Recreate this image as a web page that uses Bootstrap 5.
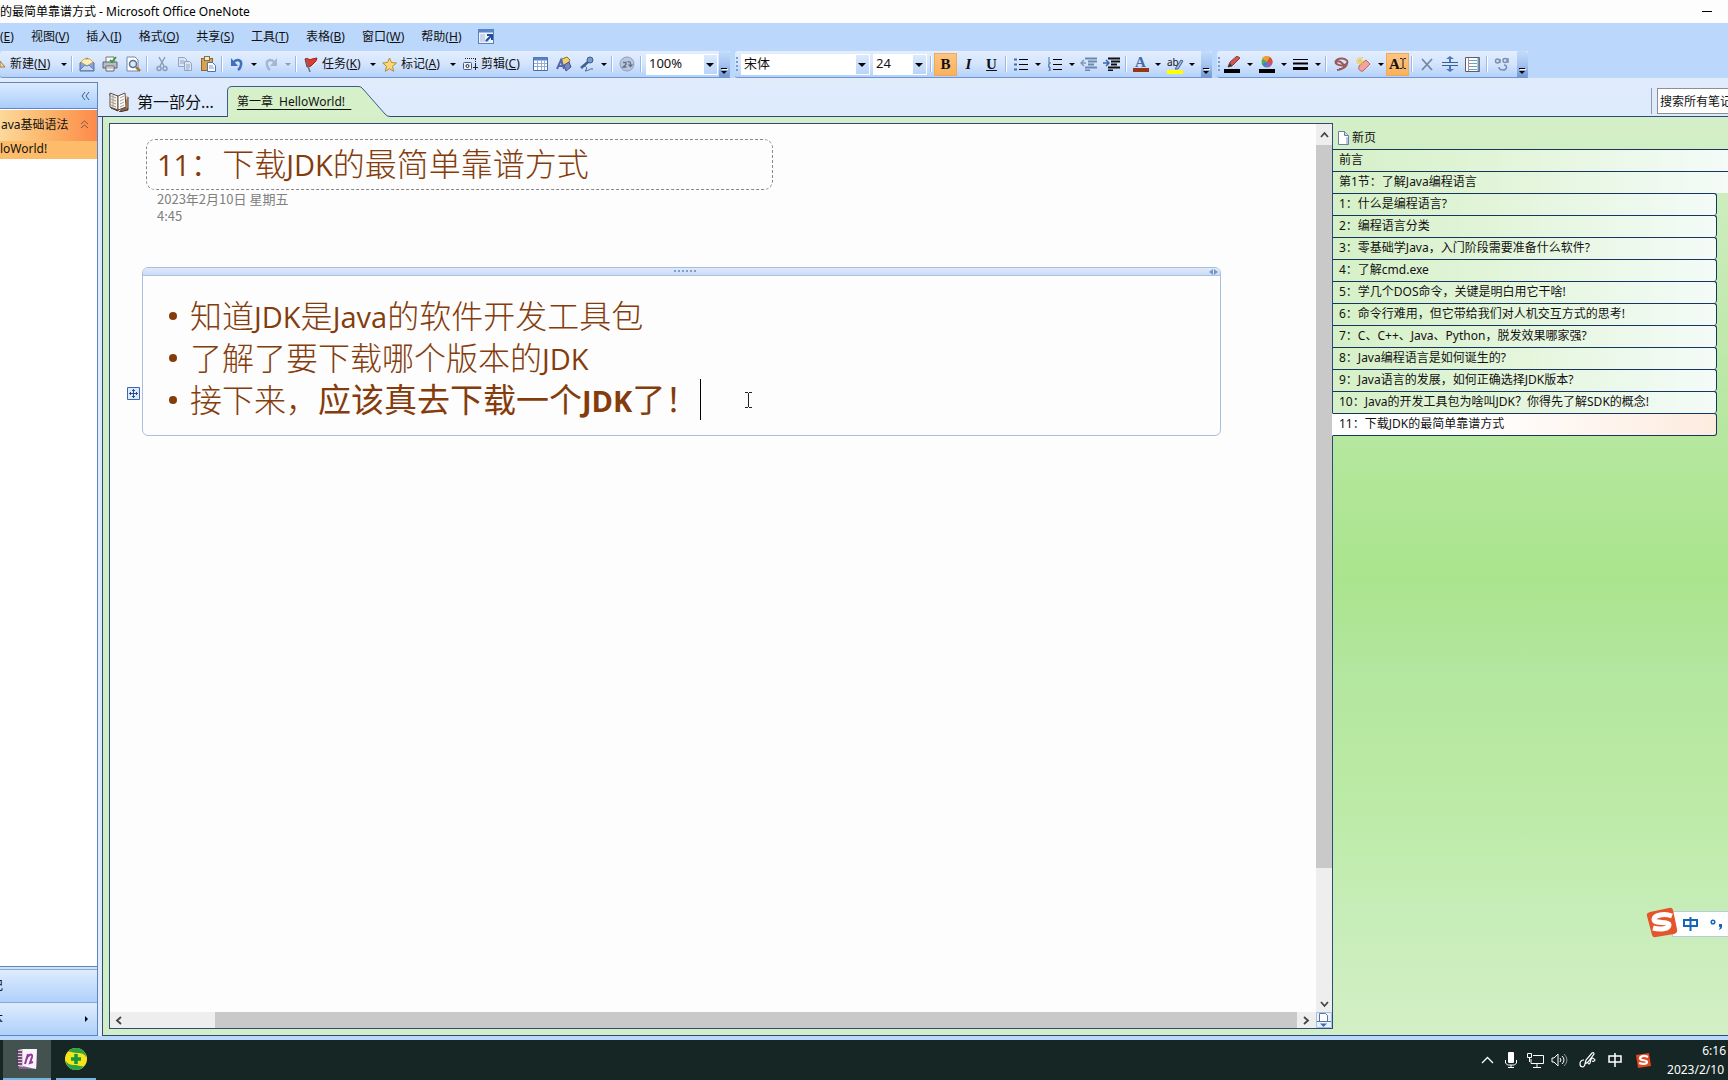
<!DOCTYPE html>
<html lang="zh-CN">
<head>
<meta charset="utf-8">
<meta name="viewport" content="width=device-width, initial-scale=1">
<title>11:下载JDK的最简单靠谱方式 - Microsoft Office OneNote</title>
<link href="https://cdn.jsdelivr.net/npm/bootstrap@5.3.0/dist/css/bootstrap.min.css" rel="stylesheet">
<style>
:root{--ink:#2c4a7c;--leaf:#d3efc5;--brown:#843c0c}
body{height:100vh;overflow:hidden;background:#bbd8fc;color:#111;font:12px/16px "Noto Sans","Noto Sans CJK SC",sans-serif}
button,input,select{font:inherit;color:inherit}
button{border:0;background:none;padding:0;display:flex;align-items:center;justify-content:center;white-space:nowrap}
a{color:inherit;text-decoration:none}
svg{display:block;flex:none}
.titlebar{height:23px;background:#fdfdfd;color:#000}
.titlebar button{width:34px;height:23px}
.menubar{height:28px;gap:17px;padding-bottom:1px}
.toolrow{height:27px;gap:5px}
.toolbar-x{height:27px;background:linear-gradient(#e3eefe,#d3e4fd 50%,#b4d1fa);border-bottom:1px solid #6f97cf;border-radius:3px 0 0 3px}
.grip{width:4px;height:14px;background:repeating-linear-gradient(#7b9cc9 0 2px,transparent 2px 4px) 1px 0/2px 100% no-repeat}
.ib{width:23px;height:23px}
.serif-b,.serif-i,.serif-a{font:700 15px "Liberation Serif",serif}
.serif-i{font-style:italic}
.serif-a{line-height:12px;color:#456aa8}
.dd{width:11px;height:23px}
.dd::after,.combo::after{content:"";border:3px solid transparent;border-top:3px solid #000;border-bottom:0}
.dd.dim::after{border-top-color:#8b9cb8}
.vr-x{width:6px;height:16px;background:linear-gradient(#9bbbe6,#9bbbe6) 2px 0/1px 100% no-repeat,linear-gradient(#fff,#fff) 3px 0/1px 100% no-repeat}
.pressed{background:linear-gradient(#fdc583,#fbb05a);outline:1px solid #efa95a;outline-offset:-1px}
.tb-text{height:23px;justify-content:flex-start}
.w-new{width:54px}.w-task{width:68px}.w-tag{width:69px}.w-clip{width:71px}
.combo{position:relative;height:21px;background:#fff;margin:0 1px 0 2px;width:72px}
.combo.face{width:129px}
.combo.size{width:54px}
.combo select{appearance:none;border:1px solid #fff;background:linear-gradient(#dceafd,#b9d3f8) right/13px 100% no-repeat #fff;width:100%;height:21px;padding:0 2px 2px;outline:0;font-size:13px;line-height:16px}
.combo::after{position:absolute;right:4px;top:9px;border-width:4px 4px 0;pointer-events:none}
.more{width:11px;height:27px;align-items:flex-end;background:linear-gradient(#c5dcfb,#a5c4f0 50%,#6f96d0);border-radius:0 3px 3px 0;margin-bottom:-1px}
.side{width:98px;margin-top:4px;border:1px solid #5c86c0;border-left:0;background:#fff}
.side-top{height:26px;background:linear-gradient(#dcebff,#a9cdfa);border-bottom:1px solid #5c86c0;padding-right:7px}
.side-book{height:31px;margin-top:1px;background:linear-gradient(90deg,#fcd99b,#fbb469 50%,#fd8a4a);padding:0 8px 2px 1px}
.side-sec{height:18px;background:#fdbc6a}
.side-btn{height:33px;background:linear-gradient(#dfecfe,#aed0fb);border-top:1px solid #84a7d6}
.sliver{width:3px;overflow:hidden;display:flex;justify-content:flex-end}
.split{height:3px;border-top:1px solid #5c86c0;background:#cfe2fb}
.strip{height:39px;background:linear-gradient(#e1ebfc,#ddebfd);border-bottom:1px solid var(--ink)}
.strip-wrap{background:#e1ebfc}
.booktab{font-size:16px;gap:8px;margin-left:10px;padding-top:9px}
.sectab{position:relative;height:31px;width:163px;margin:0 0 -1px 13px;justify-content:flex-start;padding:1px 0 0 10px;align-self:flex-end}
.sectab svg{position:absolute;left:0;top:0}
.sectab span{position:relative;text-decoration:underline;text-underline-offset:3px;white-space:pre}
.searchbox{border-left:1px solid #8d9bb0;padding-left:5px;width:77px;height:26px;overflow:hidden}
.searchbox input{width:190px;height:26px;border:1px solid #8a8f98;background:#fff;padding:0 2px;border-radius:0}
.book{margin-left:4px;border-left:1px solid var(--ink);border-bottom:1px solid var(--ink);background:linear-gradient(#d5efc8,#b4e79d 36%,#aae48c 50%,#b3e69e 60%,#bdeba7 76%,#c6edb7 86%,#d3efc5)}
.leftlip{width:6px;background:#d0eec2}
.under{height:6px;background:#d3efc5}
.paper{border:1px solid var(--ink);background:#fdfdfd;margin-top:6px}
.notezone{padding:15px 95px 0 32px}
.titlebox{width:627px;height:51px;margin-left:4px;border:1px dashed #888;border-radius:9px;padding-left:10px;font-size:32px;line-height:48px}
.hand{font-family:"Open Sans","Noto Sans CJK SC",sans-serif;font-weight:300;color:var(--brown);white-space:nowrap}
.hand i{font-style:normal;font-size:29px;font-weight:500}
.hand b{font-size:33px}
.hand b i{font-weight:700}
.stamp{margin-left:15px;color:#808080;font:400 13px/17px "Noto Sans CJK SC",sans-serif}
.outline-x{margin-top:43px;border:1px solid #a9bfdd;border-radius:6px;height:169px;position:relative}
.outline-head{height:8px;background:linear-gradient(#dfe9fb,#cbdcf6);border-bottom:1px solid #a9c1e4;border-radius:5px 5px 0 0;padding:0 2px 0 18px}
.outline-x ul{list-style:none;margin:0;padding:19px 0 0 47px;font-size:32px;line-height:42px}
.outline-x li{position:relative;height:42px}
.outline-x li::before{content:"";position:absolute;left:-21px;top:17px;width:8px;height:8px;border-radius:50%;background:var(--brown)}
.mover{position:absolute;left:-63px;top:8px}
.caret{display:inline-block;width:1px;height:41px;background:#000;vertical-align:top;margin-left:2px}
.ibeam{position:absolute;left:601px;top:124px}
.vbar{width:16px;background:#eee}
.vbar button{width:16px;height:16px}
.vbar .up{height:21px}
.vbar .extend{background:#fff}
.vthumb{background:#c9c9c9;flex:0 0 85%}
.hbar{height:16px;background:#eee}
.hbar button{width:16px;height:16px}
.hbar .right{width:19px}
.hgap{flex:0 0 89px}
.hthumb{background:#c9c9c9}
.pages{width:395px;padding-top:10px}
.newpage{height:22px;padding:0 6px 0 5px;gap:3px}
.list-group{border-radius:0;margin-left:-1px}
.list-group .pg{display:block;height:22px;border-top:1px solid #17365f;background:linear-gradient(90deg,#d5f0c7,#e3f5da 45%,#f4fbf8);padding:2px 0 0 6px;line-height:16px;white-space:nowrap;border-left:1px solid var(--ink)}
.list-group .sub{border-right:1px solid #17365f;margin-right:11px;border-radius:0 3px 3px 0}
.list-group .cur{height:23px;border-bottom:1px solid #17365f;background:linear-gradient(90deg,#fff,#fff 35%,#fdebdf);border-left-color:#fff}
.statusgap{height:4px}
.taskbar{height:40px;background:#152624;color:#fff}
.taskbtn{height:40px;width:40px;border-bottom:2px solid #76b5e4;margin-left:5px}
.taskbtn.on{width:48px;margin-left:3px;background:#43524f}
.tray{gap:8px}
.tray button{width:16px;height:24px}
.clock{text-align:right;line-height:19px;font-size:12px;padding-right:2px}
.clock .day{padding-right:2px}
.ime{position:absolute;right:0;bottom:142px;width:82px;height:31px}
.ime-bar{position:absolute;left:26px;right:0;top:4px;height:26px;background:#fff;border:1px solid #b9cbd8;border-right:0;padding-left:10px;gap:12px}
.ime>svg{position:absolute;left:0;top:0}
</style>
<script src="https://cdn.jsdelivr.net/npm/bootstrap@5.3.0/dist/js/bootstrap.bundle.min.js"></script>
</head>
<body class="d-flex flex-column">

<header class="titlebar d-flex justify-content-between align-items-center flex-shrink-0">
  <span>的最简单靠谱方式 - Microsoft Office OneNote</span>
  <button aria-label="最小化" class="me-1"><svg width="10" height="2"><path d="M0 .5h10" stroke="#000"/></svg></button>
</header>

<nav class="menubar d-flex align-items-center flex-shrink-0">
  <button>(<u>E</u>)</button><button>视图(<u>V</u>)</button><button>插入(<u>I</u>)</button><button>格式(<u>O</u>)</button><button>共享(<u>S</u>)</button><button>工具(<u>T</u>)</button><button>表格(<u>B</u>)</button><button>窗口(<u>W</u>)</button><button>帮助(<u>H</u>)</button>
  <button aria-label="全页视图" class="ms-n1"><svg width="16" height="15"><rect x=".5" y=".5" width="15" height="14" fill="#eef4fd" stroke="#5b7fb8"/><path d="M1 2h14" stroke="#5b86c8" stroke-width="3"/><path d="M2 6h5M2 8h5M2 10h5M2 12h9" stroke="#a9b8cf"/><path d="M8 12l5-5M9 6h5v5" fill="none" stroke="#1e4f9c" stroke-width="2"/></svg></button>
</nav>

<div class="toolrow d-flex flex-shrink-0">
  <div class="toolbar-x d-flex align-items-center">
    <button class="tb-text w-new"><svg class="me-1" width="6" height="12"><path d="M0 3l5 6H0z" fill="#f4d9a0" stroke="#a57a45"/></svg>新建(<u>N</u>)</button><button class="dd ms-1" aria-label="新建选项"></button>
    <span class="vr-x"></span>
    <button class="ib" aria-label="邮件"><svg width="16" height="16"><path d="M1 7l7-5 7 5v8H1z" fill="#7ea3d8" stroke="#54719f"/><path d="M2 6l3-3h6l3 3-6 4z" fill="#fdeec0" stroke="#d6a849"/><path d="M1 14l5-5 2 1 2-1 5 5" fill="#c4d9f5" stroke="#6284b6"/></svg></button>
    <button class="ib" aria-label="打印"><svg width="16" height="16"><path d="M4 6V1h8v5" fill="#fff" stroke="#777"/><path d="M1 6h14v6H1z" fill="#b9bec6" stroke="#5d636e"/><path d="M4 10h8v5H4z" fill="#f8f8f8" stroke="#666"/><path d="M8 4l2 2 4-5" fill="none" stroke="#3a9b3f" stroke-width="2"/><path d="M5 12h6" stroke="#999"/></svg></button>
    <button class="ib" aria-label="打印预览"><svg width="16" height="16"><path d="M2 1h8l3 3v11H2z" fill="#fff" stroke="#7189ad"/><circle cx="8" cy="8" r="3.5" fill="#d6eafa" stroke="#5c6f8c" stroke-width="1.5"/><path d="M11 11l4 4" stroke="#a5783a" stroke-width="2.5"/></svg></button>
    <span class="vr-x"></span>
    <button class="ib" aria-label="剪切"><svg width="14" height="16" fill="none" stroke="#8c9db9" stroke-width="1.5"><path d="M4 1l5 9M10 1L5 10"/><circle cx="4" cy="12.500" r="2"/><circle cx="10" cy="12.500" r="2"/></svg></button>
    <button class="ib" aria-label="复制"><svg width="16" height="16" fill="#d9e4f5" stroke="#93a5c3"><path d="M1.500 1.500h6l2 2v7h-8z"/><path d="M3 5h4M3 7h4"/><path d="M7.500 5.500h5l2 2v7h-7z"/><path d="M9 9h4M9 11h4M9 13h3"/></svg></button>
    <button class="ib" aria-label="粘贴"><svg width="16" height="16"><rect x="1.500" y="2.500" width="11" height="12" fill="#d8a24a" stroke="#8d672b"/><rect x="4.500" y=".5" width="5" height="4" fill="#f2e9c9" stroke="#7d7350"/><path d="M7.500 6.500h5l3 3v6h-8z" fill="#fff" stroke="#4f74ad"/><path d="M9 10h4M9 12h5" stroke="#7c9cd0"/></svg></button>
    <span class="vr-x"></span>
    <button class="ib" aria-label="撤消"><svg width="14" height="14"><path d="M3 6c4-5 9-3 8 2-.3 2-1.500 4-3 5" fill="none" stroke="#3f6fc0" stroke-width="2.500"/><path d="M1 1v8h7z" fill="#3f6fc0"/></svg></button><button class="dd" aria-label="撤消历史"></button>
    <button class="ib" aria-label="恢复"><svg width="14" height="14"><path d="M11 6C7 1 2 3 3 8c.3 2 1.500 4 3 5" fill="none" stroke="#a3b6d3" stroke-width="2.500"/><path d="M13 1v8H6z" fill="#a3b6d3"/></svg></button><button class="dd dim" aria-label="恢复历史"></button>
    <span class="vr-x"></span>
    <button class="tb-text w-task"><span class="ib d-flex align-items-center justify-content-center"><svg width="14" height="15"><path d="M1 2c3-2 4 2 7 0l5-1-1 3-5 5-4 1z" fill="#dd3b2b" stroke="#a32218"/><path d="M2 3l4 12" stroke="#67707e" stroke-width="1.500"/></svg></span>任务(<u>K</u>)</button><button class="dd" aria-label="任务选项"></button>
    <button class="tb-text w-tag"><span class="ib d-flex align-items-center justify-content-center"><svg width="15" height="15"><path d="M7.500 1l2 4.500 5 .5-4 3.300 1.200 5-4.200-2.600-4.200 2.600 1.200-5L.7 6l4.800-.5z" fill="#fcd873" stroke="#b68b3c"/></svg></span>标记(<u>A</u>)</button><button class="dd" aria-label="标记选项"></button>
    <button class="tb-text w-clip"><span class="ib d-flex align-items-center justify-content-center"><svg width="16" height="15" fill="none" stroke="#222"><path d="M3 1.500h11M13.500 2v5" stroke-dasharray="1 1"/><rect x="1.500" y="5.500" width="8" height="7" rx="1" fill="#eef3fb" stroke="#3c5b8c"/><circle cx="5.500" cy="9" r="1.500"/><path d="M13.500 7v6M11 10.500h5"/></svg></span>剪辑(<u>C</u>)</button>
    <button class="ib" aria-label="表格"><svg width="15" height="14"><path d="M.5.5h14v13H.5z" fill="#fff" stroke="#4a6da8"/><path d="M1 2h13" stroke="#5a83c7" stroke-width="3"/><path d="M1 6.500h13M1 9.500h13M4.500 3v10M8.500 3v10M11.500 3v10" stroke="#93add6"/></svg></button>
    <button class="ib" aria-label="绘图"><svg width="16" height="16"><path d="M6 3l5-2 3 3-3 6-5-1z" fill="#f3d267" stroke="#8b7333"/><path d="M1 13l4-9 3 9M3 10h4" fill="none" stroke="#5568b2" stroke-width="2"/><path d="M8 9l5-3 2 5-5 4z" fill="#7688c4" stroke="#43568d"/></svg></button>
    <button class="ib" aria-label="录音"><svg width="15" height="16"><circle cx="11" cy="4" r="3" fill="#7b9ccb" stroke="#3c5a8e"/><path d="M9 6l-7 6" stroke="#3c5a8e" stroke-width="2.500"/><path d="M2 12c4-4 8 0 4 3 4 0 5-3 8-2" fill="none" stroke="#4c6898"/></svg></button><button class="dd" aria-label="录音选项"></button>
    <span class="vr-x"></span>
    <button class="ib" aria-label="同步"><svg width="16" height="16"><circle cx="8" cy="8" r="7" fill="#b9c6dc" stroke="#8f9fba"/><path d="M4 6.500h3v2l-3 2.500h3.500M8.500 6q2-1 3 1v3M9.500 8.500l2 2 2-2" fill="none" stroke="#60708e" stroke-width="1.300"/></svg></button>
    <span class="vr-x"></span>
    <div class="combo"><select aria-label="显示比例"><option>100%</option></select></div>
    <button class="more" aria-label="更多常用按钮"><svg width="9" height="11"><path d="M1 1.500h6" stroke="#000"/><path d="M2 2.500h6" stroke="#fff"/><path d="M1 4h6L4 7z" fill="#000"/></svg></button>
  </div>

  <div class="toolbar-x d-flex align-items-center">
    <span class="grip"></span>
    <div class="combo face"><select aria-label="字体"><option>宋体</option></select></div>
    <div class="combo size"><select aria-label="字号"><option>24</option></select></div>
    <span class="vr-x"></span>
    <button class="ib pressed serif-b" aria-label="加粗">B</button>
    <button class="ib serif-i" aria-label="倾斜">I</button>
    <button class="ib serif-b" aria-label="下划线"><u>U</u></button>
    <span class="vr-x"></span>
    <button class="ib" aria-label="项目符号"><svg width="14" height="13"><path d="M0 1.500h3M0 6.500h3M0 11.500h3" stroke="#4a6da8" stroke-width="2"/><path d="M5 1.500h9M5 6.500h9M5 11.500h9" stroke="#000"/></svg></button><button class="dd" aria-label="项目符号选项"></button>
    <button class="ib" aria-label="编号"><svg width="14" height="14"><path d="M1 0v4M0 5h2v2H0v2h2M0 10h2v4H0M1 12h1" fill="none" stroke="#4a6da8"/><path d="M5 2.500h9M5 7.500h9M5 12.500h9" stroke="#000"/></svg></button><button class="dd" aria-label="编号选项"></button>
    <button class="ib" aria-label="减少缩进"><svg width="17" height="14"><path d="M5 1.500h12M8 4.500h9M8 7.500h6M5 10.500h12M5 13.500h5" stroke="#6f88ad" stroke-width="2"/><path d="M6 6H1m3-3L1 6l3 3" fill="none" stroke="#7f98bf" stroke-width="1.500"/></svg></button>
    <button class="ib" aria-label="增加缩进"><svg width="17" height="14"><path d="M5 1.500h12M8 4.500h9M8 7.500h6M5 10.500h12M5 13.500h5" stroke="#111" stroke-width="2"/><path d="M0 6h5M3 3l3 3-3 3" fill="none" stroke="#3a68ad" stroke-width="1.500"/></svg></button>
    <span class="vr-x"></span>
    <button class="ib flex-column serif-a" aria-label="字体颜色">A<svg width="16" height="4"><path d="M0 0h16v4H0z" fill="#9c3412"/></svg></button><button class="dd" aria-label="字体颜色选项"></button>
    <button class="ib" aria-label="突出显示"><svg width="18" height="21" viewBox="0 -4 18 21"><text x="1" y="8" font-size="10" fill="#111">ab</text><path d="M9 11l6-9 2 1-5 8z" fill="#9db7e2" stroke="#46618f"/><path d="M1 12h16v4H1z" fill="#ff0"/></svg></button><button class="dd" aria-label="突出显示选项"></button>
    <button class="more ms-1" aria-label="更多格式按钮"><svg width="9" height="11"><path d="M1 1.500h6" stroke="#000"/><path d="M2 2.500h6" stroke="#fff"/><path d="M1 4h6L4 7z" fill="#000"/></svg></button>
  </div>

  <div class="toolbar-x d-flex align-items-center">
    <span class="grip"></span>
    <button class="ib" aria-label="笔"><svg width="17" height="17"><path d="M4 11l2-5 7-6 3 2-8 8z" fill="#d5554d" stroke="#7d4640"/><path d="M4 11l2-4 2 3z" fill="#333"/><path d="M0 13h16v4H0z"/></svg></button><button class="dd" aria-label="笔选项"></button>
    <button class="ib" aria-label="墨迹颜色"><svg width="16" height="17"><circle cx="8" cy="6" r="5.500" fill="#4caf50"/><path d="M8 6L3 2a6 6 0 0 1 8-1z" fill="#f29b38"/><path d="M8 6l3-5a6 6 0 0 1 2 7z" fill="#e3493b"/><path d="M8 6l5 2a6 6 0 0 1-6 3z" fill="#a654c6"/><path d="M8 6l-1 5a6 6 0 0 1-4-3z" fill="#3a7fe0"/><path d="M0 13h16v4H0z"/></svg></button><button class="dd" aria-label="墨迹颜色选项"></button>
    <button class="ib" aria-label="线宽"><svg width="15" height="12"><path d="M0 1.500h15" stroke="#000"/><path d="M0 5.500h15" stroke="#000" stroke-width="2"/><path d="M0 10.500h15" stroke="#000" stroke-width="3"/></svg></button><button class="dd" aria-label="线宽选项"></button>
    <span class="vr-x"></span>
    <button class="ib" aria-label="套索"><svg width="16" height="15" fill="none" stroke="#9a5a5c" stroke-width="2"><ellipse cx="8.500" cy="5" rx="6" ry="3.500"/><path d="M3 7c-1-3 3-4 6-1s3 6-5 7M14 6c0 4-4 6-8 6"/></svg></button>
    <button class="ib" aria-label="橡皮擦"><svg width="16" height="16"><path d="M3 10l7-6 4 4-7 7c-3 1-5-2-4-5z" fill="#f4a49a" stroke="#b7685f"/><path d="M4 1v8M1 2l6 6M0 5h8M7 1L1 8" stroke="#f5c52d"/></svg></button><button class="dd" aria-label="橡皮擦选项"></button>
    <button class="ib pressed serif-b" aria-label="选择和键入">A<svg width="6" height="12"><path d="M0 .5h2l1 1 1-1h2M3 1v9M0 10.500h2l1-1 1 1h2" fill="none" stroke="#222"/></svg></button>
    <span class="vr-x"></span>
    <button class="ib" aria-label="删除"><svg width="12" height="13"><path d="M1 1l10 11M11 1L1 12" stroke="#7686a3" stroke-width="1.800"/></svg></button>
    <button class="ib" aria-label="插入空间"><svg width="16" height="16"><path d="M0 6.500h16M0 9.500h16" stroke="#3f5f92"/><path d="M8 0l4 3H9v3H7V3H4zM8 16l4-3H9v-3H7v3H4z" fill="#4b78c1"/></svg></button>
    <button class="ib" aria-label="格线"><svg width="15" height="15"><path d="M.5.5h14v14H.5z" fill="#fff" stroke="#555f70"/><path d="M3 3.500h9M3 6.500h9M3 9.500h9M3 12.500h9" stroke="#5fa8c8"/><path d="M3.500 1v13" stroke="#d38080"/><path d="M13.500 1v13" stroke="#8190a8" stroke-width="2"/></svg></button>
    <span class="vr-x"></span>
    <button class="ib" aria-label="墨迹转文本"><svg width="15" height="16" fill="none" stroke="#7d8fb0" stroke-width="1.500"><circle cx="3.500" cy="5" r="2"/><path d="M6 3v4M14 2v5"/><circle cx="11" cy="4.500" r="2"/><path d="M10 9c4 0 3 5-1 5-3 0-4-1-4-3"/></svg></button>
    <button class="more ms-1" aria-label="更多绘图按钮"><svg width="9" height="11"><path d="M1 1.500h6" stroke="#000"/><path d="M2 2.500h6" stroke="#fff"/><path d="M1 4h6L4 7z" fill="#000"/></svg></button>
  </div>
</div>

<div class="strip-wrap d-flex flex-grow-1 overflow-hidden">
  <aside class="side d-flex flex-column flex-shrink-0">
    <div class="side-top d-flex align-items-center justify-content-end flex-shrink-0"><button aria-label="折叠"><svg width="9" height="8"><path d="M4 0L1 4l3 4M8 0L5 4l3 4" fill="none" stroke="#345a96"/></svg></button></div>
    <a href="#" class="side-book d-flex align-items-center justify-content-between flex-shrink-0">ava基础语法<svg width="9" height="9"><path d="M1 4l3.500-3L8 4M1 8l3.500-3L8 8" fill="none" stroke="#7b5a48"/></svg></a>
    <a href="#" class="side-sec flex-shrink-0">loWorld!</a>
    <div class="flex-grow-1"></div>
    <div class="split flex-shrink-0"></div>
    <button class="side-btn justify-content-start flex-shrink-0"><span class="sliver">记</span></button>
    <button class="side-btn justify-content-between flex-shrink-0 pe-1"><span class="sliver">本</span><svg class="me-1" width="4" height="6"><path d="M0 0l3 3-3 3z"/></svg></button>
  </aside>

  <div class="d-flex flex-column flex-grow-1 overflow-hidden">
    <div class="strip d-flex align-items-center flex-shrink-0">
      <button class="booktab"><svg width="21" height="20"><path d="M1 3l2-1v14l7 3V5L3 2M20 5v13l-9 2" fill="#8a6246" stroke="#463126"/><path d="M2 1l8 3v14l-8-3z" fill="#f4f1ec" stroke="#5b4a40"/><path d="M10 4l7-3 1 14-8 3z" fill="#fff" stroke="#5b4a40"/><path d="M3 4l5 2M3 7l5 2M3 10l5 2M3 13l5 2M12 6l4-2M12 9l4-2M12 12l4-2M12 15l4-2M5 3v12" stroke="#a79a90"/><path d="M19 4v12" stroke="#c99a6a"/></svg>第一部分...</button>
      <button class="sectab"><svg width="163" height="31"><path d="M.5 31V5Q.5.500 5 .5H132Q134 .5 136 3L158 28Q160 30.500 163 30.500V31z" fill="#d6f0c9"/><path d="M.5 31V5Q.5.500 5 .5H132Q134 .5 136 3L158 28Q160 30.500 163 30.500" fill="none" stroke="#3b5c8c"/></svg><span>第一章  HelloWorld!  </span></button>
      <div class="searchbox ms-auto mt-2"><input aria-label="搜索" value="搜索所有笔记本"></div>
    </div>

    <main class="flex-grow-1 d-flex flex-column overflow-hidden">
      <div class="book flex-grow-1 d-flex overflow-hidden">
        <div class="leftlip"></div>
        <div class="d-flex flex-column flex-grow-1">
          <div class="paper flex-grow-1 d-flex">
            <div class="d-flex flex-column flex-grow-1">
              <div class="notezone flex-grow-1">
                <h1 class="titlebox hand mb-0"><i>11</i>：下载<i>JDK</i>的最简单靠谱方式</h1>
                <div class="stamp">2023年2月10日 星期五<br>4:45</div>
                <section class="outline-x">
                  <div class="outline-head d-flex align-items-center"><svg class="mx-auto" width="23" height="4"><path d="M0 1h23" stroke="#7f9fca" stroke-width="2" stroke-dasharray="2 2"/></svg><svg width="9" height="6"><path d="M4 0v6L0 3zM5 0v6l4-3z" fill="#7b98c2"/></svg></div>
                  <ul class="hand">
                    <li>知道<i>JDK</i>是<i>Java</i>的软件开发工具包</li>
                    <li>了解了要下载哪个版本的<i>JDK</i></li>
                    <li><svg class="mover" width="13" height="13"><path d="M.5.500h12v12H.5z" fill="#dce9fb" stroke="#3b66a8"/><path d="M6.500 2v9M2 6.500h9M5 3.500h3M5 9.500h3M3.500 5v3M9.500 5v3" stroke="#24508f"/></svg>接下来，<b>应该真去下载一个<i>JDK</i>了！</b><span class="caret"></span></li>
                  </ul>
                  <svg class="ibeam" width="9" height="16"><path d="M1 .5h3M5 .5h3M4.500 1v14M1 15.500h3M5 15.500h3" stroke="#222"/></svg>
                </section>
              </div>
              <div class="hbar d-flex align-items-center">
                <button aria-label="向左滚动"><svg width="7" height="9"><path d="M6 1L2 4.500 6 8" fill="none" stroke="#444" stroke-width="1.800"/></svg></button>
                <span class="hgap"></span><span class="hthumb h-100 flex-grow-1"></span>
                <button class="right" aria-label="向右滚动"><svg width="7" height="9"><path d="M1 1l4 3.500L1 8" fill="none" stroke="#444" stroke-width="1.800"/></svg></button>
              </div>
            </div>
            <div class="vbar d-flex flex-column">
              <button class="up" aria-label="向上滚动"><svg width="9" height="7"><path d="M1 6l3.500-4L8 6" fill="none" stroke="#444" stroke-width="1.800"/></svg></button>
              <div class="flex-grow-1 d-flex flex-column"><span class="vthumb"></span></div>
              <button aria-label="向下滚动"><svg width="9" height="7"><path d="M1 1l3.500 4L8 1" fill="none" stroke="#444" stroke-width="1.800"/></svg></button>
              <button class="extend" aria-label="向下延长页面"><svg width="16" height="16"><path d="M.5.500h15v15H.5z" fill="#eaf1fc" stroke="#a9bfe2"/><path d="M3.500 9V1.500h6l2 2V9" fill="#fff" stroke="#5775a8"/><path d="M1 9.500h14" stroke="#5775a8"/><path d="M4 11.500h7L7.500 15z" fill="#4566b0"/></svg></button>
            </div>
          </div>
          <div class="under flex-shrink-0"></div>
        </div>
        <div class="pages flex-shrink-0">
          <button class="newpage"><svg width="11" height="14"><path d="M.5.500h6l4 4v9H.5z" fill="#fff" stroke="#6880a8"/><path d="M6.500.5v4h4" fill="#c5d4ec" stroke="#6880a8"/><path d="M9 6v7" stroke="#b9c8e0" stroke-width="2"/></svg>新页</button>
          <div class="list-group">
            <a href="#" class="pg">前言</a>
            <a href="#" class="pg">第1节：了解Java编程语言</a>
            <a href="#" class="pg sub">1：什么是编程语言?</a>
            <a href="#" class="pg sub">2：编程语言分类</a>
            <a href="#" class="pg sub">3：零基础学Java，入门阶段需要准备什么软件?</a>
            <a href="#" class="pg sub">4：了解cmd.exe</a>
            <a href="#" class="pg sub">5：学几个DOS命令，关键是明白用它干啥!</a>
            <a href="#" class="pg sub">6：命令行难用，但它带给我们对人机交互方式的思考!</a>
            <a href="#" class="pg sub">7：C、C++、Java、Python，脱发效果哪家强?</a>
            <a href="#" class="pg sub">8：Java编程语言是如何诞生的?</a>
            <a href="#" class="pg sub">9：Java语言的发展，如何正确选择JDK版本?</a>
            <a href="#" class="pg sub">10：Java的开发工具包为啥叫JDK？你得先了解SDK的概念!</a>
            <a href="#" class="pg sub cur">11：下载JDK的最简单靠谱方式</a>
          </div>
        </div>
      </div>
    </main>
  </div>
</div>
<div class="statusgap flex-shrink-0"></div>

<footer class="taskbar d-flex align-items-center flex-shrink-0">
  <button class="taskbtn on" aria-label="OneNote"><svg width="24" height="24"><path d="M5 2h15l2 2v16l-3 2H4L2 8z" fill="#8d5f92"/><path d="M7 2h15l-1 20-14-3z" fill="#f8f4f9"/><path d="M3 3l5-1v18l-5-1z" fill="#d9c5dc"/><path d="M2 5h5M2 8h5M2 11h5M2 14h5M2 17h5" stroke="#4c2a52" stroke-width="1.500"/><path d="M10 17l3-10M11 13c2-6 7-7 6-3l-2 6 3-1" fill="none" stroke="#94399b" stroke-width="2"/></svg></button>
  <button class="taskbtn" aria-label="安全卫士"><svg width="24" height="24"><circle cx="12" cy="12" r="11" fill="#f6e51b"/><path d="M4 5C8 0 17-1 21 6q1 2 1 4c-2-4-6-4-9-4-4 0-5-2-9-1zM20 19c-4 5-13 6-17-1q-1-2-1-4c2 4 6 4 9 4 4 0 5 2 9 1z" fill="#2fa04a"/><path d="M12 7v10M7 12h10" stroke="#16963a" stroke-width="3.500"/></svg></button>
  <div class="tray d-flex align-items-center ms-auto">
    <button aria-label="显示隐藏的图标"><svg width="13" height="8"><path d="M1 7l5.500-5.500L12 7" fill="none" stroke="#fff" stroke-width="1.300"/></svg></button>
    <button aria-label="麦克风"><svg width="12" height="16"><rect x="3" y="0" width="6" height="11" rx="1" fill="#fff"/><path d="M.5 8v3l2 2h7l2-2V8M6 13v3M3 15.500h6" fill="none" stroke="#fff"/></svg></button>
    <button aria-label="网络"><svg width="17" height="15" fill="none" stroke="#fff"><path d="M6 2.500h10.500v8H4V6M10 11v3M6 14.500h8"/><path d="M.5.500h4v4h-4zM2.500 5v4"/></svg></button>
    <button aria-label="音量"><svg width="17" height="14" fill="none" stroke="#fff"><path d="M1 5v4h2l4 4V1L3 5z"/><path d="M9 5q2 2 0 4"/><path d="M11 3q4 4 0 8"/><path d="M13 1q6 6 0 12" stroke="#8a9593"/></svg></button>
    <button aria-label="笔" class="ms-1"><svg width="17" height="16" fill="none" stroke="#fff" stroke-width="1.200"><path d="M6 12l1-4 6-7q2-1 2 1l-6 8zM5 8q-4 0-4 4 0 3 3 3 2-1 2-3M9 11q1 2 2 0l1-4q2-2 4 1-1 2-3 1"/></svg></button>
    <button aria-label="输入法" class="ms-1"><svg width="14" height="16" fill="none" stroke="#fff" stroke-width="1.500"><path d="M1 4h12v6H1zM7 1v14"/></svg></button>
    <button aria-label="搜狗输入法" class="ms-1"><svg width="17" height="17"><path d="M1 3l13-2 2 13-13 2z" fill="#e6461f"/><path d="M13 5C9 3 5 4 5 6.500 5 9 12 7.500 12 10c0 2-4 2.500-8 1" fill="none" stroke="#fff" stroke-width="2.200"/></svg></button>
    <div class="clock ms-2"><div>6:16</div><div class="day">2023/2/10</div></div>
  </div>
</footer>

<div class="ime"><div class="ime-bar d-flex align-items-center"><svg width="15" height="14"><path d="M1 3h13v6H1zM7.500 0v14" fill="none" stroke="#1467b8" stroke-width="2"/></svg><svg width="12" height="11"><circle cx="3" cy="3" r="1.800" fill="none" stroke="#1467b8" stroke-width="1.500"/><path d="M9 5h3v3q0 2-3 3l1-3H9z" fill="#1467b8"/></svg></div><svg width="33" height="31"><path d="M4 5l19-4q3-1 4 2l4 19q1 4-3 5L10 30q-3 1-4-2L1 9q-1-3 3-4z" fill="#e5552b"/><path d="M26 9C18 6 8 8 8 12.500 8 17 23 14 23 18c0 4-9 5-16 3" fill="none" stroke="#fff" stroke-width="5"/></svg></div>
</body>
</html>
